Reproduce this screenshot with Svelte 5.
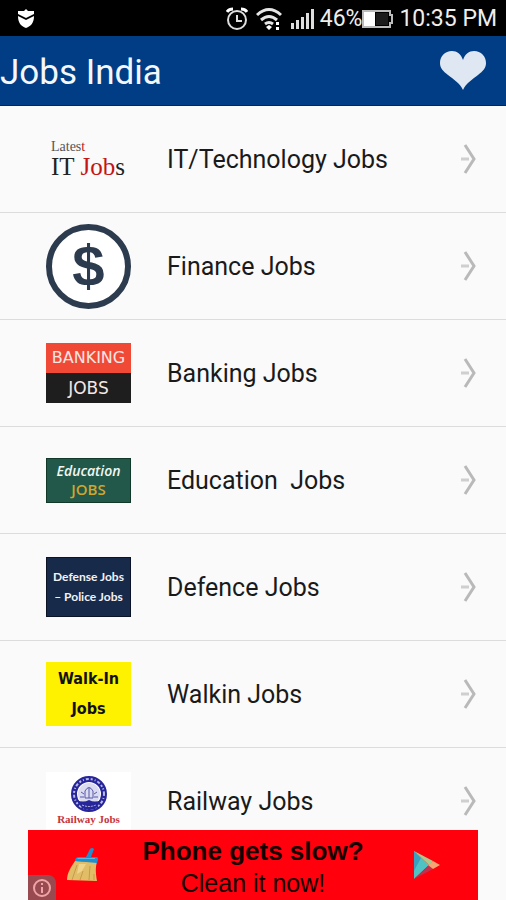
<script>
  const jobs = [
    { id: 'it', label: 'IT/Technology Jobs' },
    { id: 'finance', label: 'Finance Jobs' },
    { id: 'banking', label: 'Banking Jobs' },
    { id: 'education', label: 'Education\u00a0 Jobs' },
    { id: 'defence', label: 'Defence Jobs' },
    { id: 'walkin', label: 'Walkin Jobs' },
    { id: 'railway', label: 'Railway Jobs' },
  ];

  let favourite = $state(false);
</script>

<div class="screen">
  <div class="status">
    <svg class="shield" width="18" height="20" viewBox="0 0 18 20" aria-hidden="true">
      <path fill="#fff" d="M1 2 L7 2 L9 0 L11 2 L17 2 V5 L9 9 L1 5 Z" />
      <path fill="#fff" d="M1 7 L9 11 L17 7 C17 14 14 17 9 19 C4 17 1 14 1 7 Z" />
    </svg>
    <svg class="alarm" width="22" height="24" viewBox="0 0 22 24" fill="none" stroke="#ddd" stroke-width="2" aria-hidden="true">
      <circle cx="11" cy="13" r="9" />
      <path d="M11 8 V14 H16" />
      <path stroke="#fff" stroke-width="3" d="M1 5 Q3 2 7 2 M15 2 Q19 2 21 5" />
    </svg>
    <svg class="wifi" width="26" height="24" viewBox="0 0 26 24" fill="none" stroke="#e6e6e6" stroke-width="3" aria-hidden="true">
      <path d="M1 8 Q13 -3 25 8" />
      <path d="M5 13 Q13 6 21 13" />
      <path d="M9 17 Q13 14 17 17" />
      <path fill="#fff" stroke="none" d="M10 20 L13 18 L16 20 L13 23 Z M20 15 h3 v3 h-3 Z M20 20 h3 v3 h-3 Z" />
    </svg>
    <svg class="signal" width="23" height="22" viewBox="0 0 23 22" fill="#ddd" aria-hidden="true">
      <path d="M0 15h3v6H0z M5 12h3v9H5z M10 9h3v12h-3z M15 5h3v16h-3z M20 1h3v20h-3z" />
    </svg>
    <span>46%</span>
    <svg class="battery" width="31" height="18" viewBox="0 0 31 18" aria-hidden="true">
      <path fill="none" stroke="#bbb" stroke-width="2" d="M1 1 H28 V5 H30 V13 H28 V17 H1 Z" />
      <path fill="#fff" d="M2 2h11v14H2z" />
      <path fill="#1c1c1c" d="M14 3h12v12H14z" />
    </svg>
    <span>10:35 PM</span>
  </div>

  <header>
    <h1>Jobs India</h1>
    <button type="button" aria-label="Favourites" aria-pressed={favourite} onclick={() => (favourite = !favourite)}>
      <svg width="46" height="40" viewBox="0 0 46 40" aria-hidden="true">
        <path fill="#dfe8f2" d="M23 39 C20 32 13 28 8 24 C3 20 0 17 0 12 C0 5 5 0 12 0 C17 0 21 3 23 9 C25 3 29 0 34 0 C41 0 46 5 46 12 C46 17 43 20 38 24 C33 28 26 32 23 39 Z" />
      </svg>
    </button>
  </header>

  <ul>
    {#each jobs as job (job.id)}
      <li>
        <a href="#{job.id}">
          <span class="thumb {job.id}" aria-hidden="true">
            {#if job.id === 'it'}
              <span class="latest">Lates<em>t</em></span>
              <span class="big">IT <em>Job</em>s</span>
            {:else if job.id === 'finance'}
              <span>$</span>
            {:else if job.id === 'banking'}
              <span class="top">BANKING</span>
              <span class="bottom">JOBS</span>
            {:else if job.id === 'education'}
              <span class="script">Education</span>
              <span class="gold">JOBS</span>
            {:else if job.id === 'defence'}
              <span>Defense Jobs</span>
              <span>– Police Jobs</span>
            {:else if job.id === 'walkin'}
              <span>Walk-In</span>
              <span>Jobs</span>
            {:else}
              <svg width="36" height="36" viewBox="0 0 36 36" fill="none">
                <circle cx="18" cy="18" r="15" stroke="#26269a" stroke-width="6" />
                <circle cx="18" cy="18" r="15" stroke="#b9b9e4" stroke-width="2" stroke-dasharray="2 2 1 2 3 2" />
                <circle cx="18" cy="18" r="11" fill="#dcdcf0" />
                <path stroke="#5757ac" stroke-width="1" d="M14 22 V15 Q18 8 22 15 V22 Z M18 12 V22 M10 16 L13 18 M26 16 L23 18 M9 21 H13 M23 21 H27" />
                <path fill="#26269a" d="M6 24 Q12 27 18 24 Q24 27 30 24 Q26 34 18 34 Q10 34 6 24 Z" />
                <path stroke="#b9b9e4" stroke-dasharray="2 1" d="M11 29 Q18 32 25 29" />
              </svg>
              <span>Railway Jobs</span>
            {/if}
          </span>
          <span class="label">{job.label}</span>
          <svg class="arrow" width="16" height="30" viewBox="0 0 16 30" fill="none" aria-hidden="true">
            <path stroke="#b9b9b9" stroke-width="3" d="M5 1 L14 15 L5 29" />
            <path stroke="#cfcfcf" stroke-width="3" d="M1 15 H9" />
          </svg>
        </a>
      </li>
    {/each}
  </ul>

  <a class="ad" href="#clean">
    <svg class="broom" width="34" height="36" viewBox="0 0 34 36" aria-hidden="true">
      <path fill="#e2bd68" d="M9 14 L31 15 C29 21 30 28 31 34 L1 33 C1 26 5 20 9 14 Z" />
      <path fill="none" stroke="#c79b48" d="M11 18 L6 33 M17 24 L14 33 M24 19 L23 33 M28 27 L28 33" />
      <path fill="#f0d48c" d="M13 17 L20 17 L16 24 L11 27 Z" />
      <path fill="#1f8fd0" d="M9 14 Q9 10 13 10 L20 10 L24 2 Q26 0 28 2 L25 10 L31 10 Q33 11 31 16 Z" />
      <path fill="#57b8e8" d="M12 11 H29 V12 H11 Z" />
    </svg>
    <span class="copy">
      <strong>Phone gets slow?</strong>
      <span>Clean it now!</span>
    </span>
    <svg class="play" width="34" height="28" viewBox="-8 0 34 28" aria-hidden="true">
      <path fill="#4fc3c4" d="M0 0 L15 14 L0 28 Z" />
      <path fill="#3b9fc0" d="M0 0 L7 7 L0 20 Z" />
      <path fill="#a9c98f" d="M0 0 L19 10 L15 14 Z" />
      <path fill="#c2304e" d="M0 28 L15 14 L19 18 Z" />
      <path fill="#f5a474" d="M19 10 L26 14 L19 18 L14 14 Z" />
    </svg>
    <span class="info">
      <svg width="18" height="18" viewBox="0 0 18 18" fill="none" stroke="#f0a5a5" stroke-width="2" aria-hidden="true">
        <circle cx="9" cy="9" r="8" />
        <path d="M9 8 V14 M9 4 V6" />
      </svg>
    </span>
  </a>
</div>

<style>
  :global(body) {
    margin: 0;
    background: #fafafa;
  }

  .screen {
    display: flex;
    flex-direction: column;
    height: 100vh;
    overflow: hidden;
    background: #fafafa;
    font-family: Roboto, sans-serif;
  }

  .status {
    display: flex;
    flex: none;
    align-items: center;
    box-sizing: border-box;
    height: 36px;
    padding: 2px 9px 0 17px;
    background: #000;
    color: #eee;
    font-size: 23px;
    line-height: 34px;
  }

  .alarm {
    margin-left: auto;
  }

  .wifi {
    margin-left: 8px;
  }

  .signal {
    margin: 0 6px 0 9px;
  }

  .battery {
    margin-right: 6px;
  }

  header {
    display: flex;
    flex: none;
    align-items: center;
    justify-content: space-between;
    box-sizing: border-box;
    height: 70px;
    padding-right: 20px;
    border-bottom: 1px solid #0a1b80;
    background: #003d85;
  }

  h1 {
    margin: 0;
    padding-top: 4px;
    color: #f4f7fb;
    font-size: 35px;
    font-weight: 400;
    line-height: 64px;
  }

  button {
    padding: 0;
    border: 0;
    background: none;
    cursor: pointer;
  }

  button svg {
    display: block;
  }

  ul {
    flex: 1;
    min-height: 0;
    margin: 0;
    padding: 0;
    overflow-y: auto;
    list-style: none;
    scrollbar-width: none;
  }

  li a {
    display: flex;
    align-items: center;
    box-sizing: border-box;
    height: 107px;
    padding: 0 30px 0 46px;
    border-bottom: 1px solid #dcdcdc;
    color: #1a1a1a;
    text-decoration: none;
  }

  .label {
    flex: 1;
    margin-left: 36px;
    padding-top: 2px;
    font-size: 25px;
    line-height: 32px;
    white-space: nowrap;
  }

  .thumb {
    display: flex;
    flex: none;
    flex-direction: column;
    align-items: center;
    justify-content: center;
    box-sizing: border-box;
    width: 85px;
    white-space: nowrap;
  }

  em {
    color: #c41414;
    font-style: normal;
  }

  .it {
    align-items: flex-start;
    padding-left: 5px;
    color: #222;
    font-family: "Liberation Serif", serif;
  }

  .latest {
    color: #555;
    font-size: 14px;
    line-height: 16px;
  }

  .big {
    font-size: 25px;
    line-height: 24px;
  }

  .finance {
    height: 85px;
    border: 6px solid #2c3b4d;
    border-radius: 50%;
    background: #fff;
    color: #2c3b4d;
    font-family: "Liberation Sans", sans-serif;
    font-size: 58px;
    font-weight: 700;
    line-height: 60px;
  }

  .banking {
    align-items: stretch;
    color: #f5e6e4;
    font-family: "DejaVu Sans", sans-serif;
    font-size: 17px;
    line-height: 30px;
    text-align: center;
  }

  .top {
    background: #f04a37;
    font-size: 16px;
  }

  .bottom {
    background: #1e1e1e;
  }

  .education {
    height: 45px;
    border: 1px solid #12382a;
    background: #22584a;
  }

  .script {
    color: #f2f6f2;
    font-family: "Open Sans", sans-serif;
    font-size: 14px;
    font-style: italic;
    font-weight: 600;
    line-height: 18px;
  }

  .gold {
    color: #d0a62c;
    font-family: "Open Sans", sans-serif;
    font-size: 15px;
    font-weight: 600;
    line-height: 18px;
  }

  .defence {
    height: 60px;
    border: 1px solid #0b1426;
    background: #182a4a;
    color: #f0f2f6;
    font-family: Lato, sans-serif;
    font-size: 12px;
    font-weight: 700;
    line-height: 20px;
  }

  .walkin {
    height: 64px;
    background: #fff200;
    color: #111;
    font-family: "DejaVu Sans Condensed", "DejaVu Sans", sans-serif;
    font-size: 16px;
    font-weight: 700;
    line-height: 30px;
  }

  .railway {
    height: 58px;
    background: #fff;
    color: #c8343c;
    font-family: "Liberation Serif", serif;
    font-size: 11px;
    font-weight: 700;
    line-height: 14px;
  }

  .ad {
    position: relative;
    display: flex;
    flex: none;
    align-items: center;
    justify-content: space-between;
    box-sizing: border-box;
    height: 70px;
    margin: 0 28px;
    padding: 0 38px;
    background: #ff000c;
    color: #160000;
    font-family: "Liberation Sans", sans-serif;
    text-decoration: none;
  }

  .copy {
    display: flex;
    flex-direction: column;
    align-items: center;
    padding-top: 4px;
    font-size: 25px;
    line-height: 32px;
    white-space: nowrap;
  }

  strong {
    font-size: 26px;
  }

  .info {
    position: absolute;
    bottom: 0;
    left: 0;
    display: flex;
    align-items: center;
    justify-content: center;
    width: 28px;
    height: 25px;
    border-top-right-radius: 8px;
    background: #994a50;
  }
</style>
